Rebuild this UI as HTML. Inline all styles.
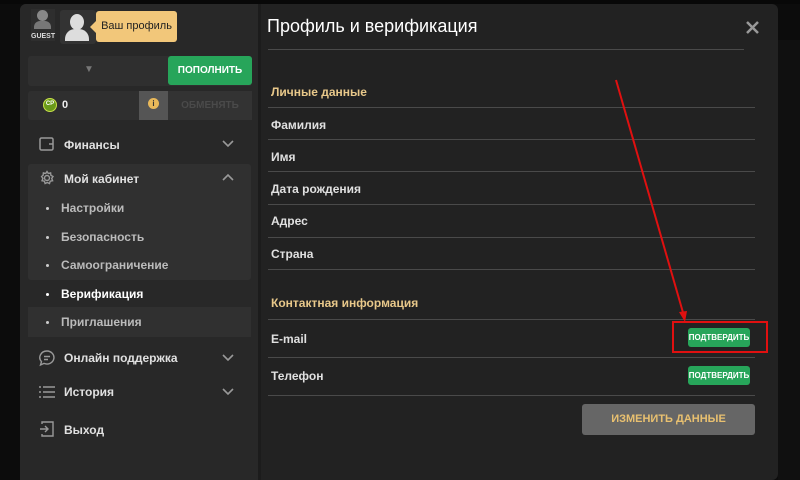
<!DOCTYPE html>
<html><head><meta charset="utf-8"><style>
*{margin:0;padding:0;box-sizing:border-box}
body{width:800px;height:480px;background:#0c0c0c;font-family:"Liberation Sans",sans-serif;position:relative;overflow:hidden;color:#ddd}
.a{position:absolute}
.t{font-size:12px;font-weight:bold;color:#e0e0e0}
.ln{position:absolute;left:268px;width:487px;height:1px;background:#4a4a4a}
.sub{font-size:12px;color:#bbb;font-weight:bold}
.dot{position:absolute;left:46px;width:3px;height:3px;border-radius:50%;background:#ccc}
.btn{position:absolute;background:#27a55a;color:#fff;font-size:8px;font-weight:bold;border-radius:3px;text-align:center;line-height:19px}
</style></head><body>
<div class="a" style="left:0;top:0;width:800px;height:4px;background:#080808"></div>
<div class="a" style="left:20px;top:4px;width:758px;height:476px;background:#222;border-radius:6px"></div>
<div class="a" style="left:778px;top:40px;width:22px;height:440px;background:#101010"></div>
<!-- left panel -->
<div class="a" style="left:20px;top:4px;width:238px;height:476px;background:#282828;border-radius:6px 0 0 0"></div>
<div class="a" style="left:258px;top:4px;width:3px;height:476px;background:#1c1c1c"></div>
<!-- guest -->
<div class="a" style="left:31px;top:9px;width:24px;height:32px;background:#2e2e2e"></div>
<div class="a" style="left:37px;top:10px;width:11px;height:11px;border-radius:50%;background:#888"></div>
<div class="a" style="left:34px;top:21px;width:17px;height:8px;border-radius:6px 6px 0 0;background:#777"></div>
<div class="a" style="left:31px;top:33px;font-size:7px;font-weight:bold;color:#ddd;width:24px;text-align:center">GUEST</div>
<div class="a" style="left:60px;top:10px;width:36px;height:34px;background:#333;border-radius:3px"></div>
<div class="a" style="left:70px;top:14px;width:14px;height:16px;border-radius:50%;background:#ddd"></div>
<div class="a" style="left:65px;top:29px;width:24px;height:12px;border-radius:10px 10px 0 0;background:#ddd"></div>
<div class="a" style="left:96px;top:11px;width:81px;height:31px;background:#f2c77a;border-radius:3px;color:#222;font-size:11px;line-height:31px;text-align:center">Ваш профиль</div>
<div class="a" style="left:90px;top:21px;border:6px solid transparent;border-right-color:#f2c77a;border-left:0"></div>
<!-- deposit row -->
<div class="a" style="left:28px;top:56px;width:224px;height:30px;background:#2f2f2f;border-radius:3px"></div>
<div class="a" style="left:84px;top:64px;color:#777;font-size:10px">▼</div>
<div class="a" style="left:168px;top:56px;width:84px;height:29px;background:#27a55a;border-radius:3px;color:#fff;font-size:10px;font-weight:bold;text-align:center;line-height:29px">ПОПОЛНИТЬ</div>
<div class="a" style="left:28px;top:91px;width:224px;height:29px;background:#2f2f2f;border-radius:3px"></div>
<div class="a" style="left:43px;top:98px;width:14px;height:14px;border-radius:50%;background:#6a9a1a;border:1.5px solid #c9e04a;color:#fff;font-size:6px;font-weight:bold;text-align:center;line-height:11px">CP</div>
<div class="a" style="left:62px;top:99px;font-size:11px;font-weight:bold;color:#eee">0</div>
<div class="a" style="left:139px;top:91px;width:29px;height:29px;background:#555"></div>
<div class="a" style="left:148px;top:98px;width:11px;height:11px;border-radius:50%;background:#e8b85a;color:#333;font-size:8px;font-weight:bold;text-align:center;line-height:11px">i</div>
<div class="a" style="left:168px;top:91px;width:84px;height:29px;background:#333;color:#4a4a4a;font-size:10px;font-weight:bold;text-align:center;line-height:29px">ОБМЕНЯТЬ</div>
<!-- menu -->
<svg class="a" style="left:38px;top:136px" width="18" height="16" viewBox="0 0 18 16" fill="none" stroke="#999" stroke-width="1.5"><rect x="2" y="2" width="13" height="12" rx="1.5"/><path d="M11 8h4"/></svg>
<div class="a t" style="left:64px;top:138px">Финансы</div>
<svg class="a" style="left:222px;top:140px" width="12" height="8" viewBox="0 0 12 8" fill="none" stroke="#999" stroke-width="1.6"><path d="M1 1l5 5 5-5"/></svg>
<div class="a" style="left:28px;top:164px;width:223px;height:116px;background:#303030;border-radius:3px"></div>
<svg class="a" style="left:39px;top:170px" width="16" height="16" viewBox="0 0 16 16" fill="none" stroke="#999" stroke-width="1.4"><circle cx="8" cy="8" r="2.5"/><path d="M8 1.5l1.3 2 2.3-.6.3 2.4 2.1 1.2-1.3 2 .9 2.2-2.4.5-.7 2.3-2.2-1-2.2 1-.7-2.300-2.4-.5.9-2.2-1.3-2L4.1 5.3l.3-2.4 2.3.6z"/></svg>
<div class="a t" style="left:64px;top:172px">Мой кабинет</div>
<svg class="a" style="left:222px;top:173px" width="12" height="8" viewBox="0 0 12 8" fill="none" stroke="#999" stroke-width="1.6"><path d="M1 7l5-5 5 5"/></svg>
<div class="dot" style="top:207px"></div><div class="a sub" style="left:61px;top:201px">Настройки</div>
<div class="dot" style="top:236px"></div><div class="a sub" style="left:61px;top:230px">Безопасность</div>
<div class="dot" style="top:264px"></div><div class="a sub" style="left:61px;top:258px">Самоограничение</div>
<div class="dot" style="top:293px;background:#fff"></div><div class="a t" style="left:61px;top:287px;color:#fff">Верификация</div>
<div class="a" style="left:28px;top:307px;width:223px;height:30px;background:#303030"></div>
<div class="dot" style="top:321px"></div><div class="a sub" style="left:61px;top:315px">Приглашения</div>
<svg class="a" style="left:38px;top:349px" width="18" height="18" viewBox="0 0 18 18" fill="none" stroke="#999" stroke-width="1.4"><path d="M9 2a7 6.5 0 1 1-3 12.4L2.5 16l1-3.3A7 6.5 0 0 1 9 2z"/><path d="M6 7.5h6M6 10.5h4"/></svg>
<div class="a t" style="left:64px;top:351px">Онлайн поддержка</div>
<svg class="a" style="left:222px;top:354px" width="12" height="8" viewBox="0 0 12 8" fill="none" stroke="#999" stroke-width="1.6"><path d="M1 1l5 5 5-5"/></svg>
<svg class="a" style="left:38px;top:385px" width="18" height="14" viewBox="0 0 18 14" fill="none" stroke="#999" stroke-width="1.4"><path d="M1 2h2M5 2h12M1 7h2M5 7h12M1 12h2M5 12h12"/></svg>
<div class="a t" style="left:64px;top:385px">История</div>
<svg class="a" style="left:222px;top:388px" width="12" height="8" viewBox="0 0 12 8" fill="none" stroke="#999" stroke-width="1.6"><path d="M1 1l5 5 5-5"/></svg>
<svg class="a" style="left:39px;top:420px" width="16" height="18" viewBox="0 0 16 18" fill="none" stroke="#999" stroke-width="1.4"><path d="M3 4V2h11v14H3v-2"/><path d="M1 9h8M6 6l3 3-3 3"/></svg>
<div class="a t" style="left:64px;top:423px">Выход</div>
<!-- right -->
<div class="a" style="left:267px;top:16px;font-size:18px;color:#fff">Профиль и верификация</div>
<svg class="a" style="left:746px;top:21px" width="13" height="13" viewBox="0 0 13 13" stroke="#999" stroke-width="2.5"><path d="M1 1l11 11M12 1L1 12"/></svg>
<div class="ln" style="top:49px;width:476px"></div>
<div class="a" style="left:271px;top:85px;font-size:12px;font-weight:bold;color:#e8c88a">Личные данные</div>
<div class="ln" style="top:107px"></div>
<div class="a t" style="left:271px;top:118px">Фамилия</div>
<div class="ln" style="top:139px"></div>
<div class="a t" style="left:271px;top:150px">Имя</div>
<div class="ln" style="top:171px"></div>
<div class="a t" style="left:271px;top:182px">Дата рождения</div>
<div class="ln" style="top:204px"></div>
<div class="a t" style="left:271px;top:214px">Адрес</div>
<div class="ln" style="top:237px"></div>
<div class="a t" style="left:271px;top:247px">Страна</div>
<div class="ln" style="top:269px"></div>
<div class="a" style="left:271px;top:296px;font-size:12px;font-weight:bold;color:#e8c88a">Контактная информация</div>
<div class="ln" style="top:319px"></div>
<div class="a t" style="left:271px;top:332px">E-mail</div>
<div class="btn" style="left:688px;top:328px;width:62px">ПОДТВЕРДИТЬ</div>
<div class="ln" style="top:357px"></div>
<div class="a t" style="left:271px;top:369px">Телефон</div>
<div class="btn" style="left:688px;top:366px;width:62px">ПОДТВЕРДИТЬ</div>
<div class="ln" style="top:395px"></div>
<div class="a" style="left:582px;top:404px;width:173px;height:31px;background:#666;border-radius:3px;color:#e8c070;font-size:11px;font-weight:bold;text-align:center;line-height:31px">ИЗМЕНИТЬ ДАННЫЕ</div>
<!-- annotation -->
<div class="a" style="left:672px;top:321px;width:96px;height:32px;border:2px solid #e01010"></div>
<svg class="a" style="left:0;top:0" width="800" height="480"><path d="M616 80L684 316" stroke="#e01010" stroke-width="2"/><path d="M679 312l6 10 2-11z" fill="#e01010"/></svg>
</body></html>
